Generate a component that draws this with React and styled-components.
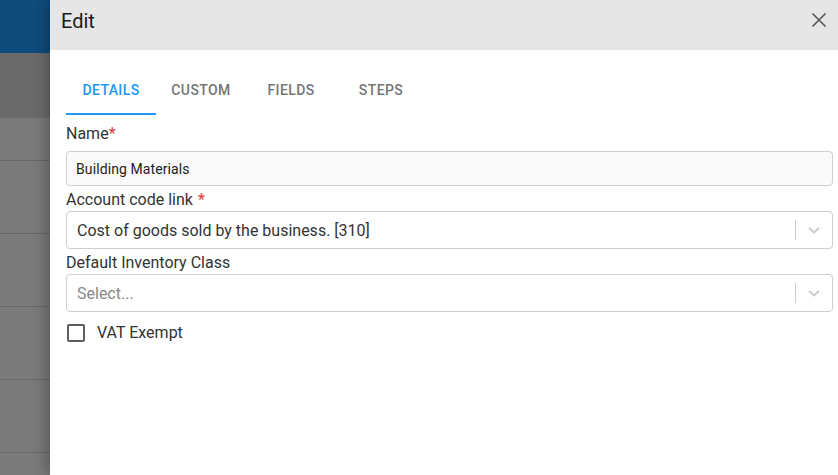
import React from 'react';
import styled, { createGlobalStyle } from 'styled-components';

//----GLOBAL----//

const Global = createGlobalStyle`
  html, body { margin: 0; padding: 0; height: 100%; }
  body { font-family: Roboto, "Liberation Sans", sans-serif; overflow: hidden; }
  #root { height: 100%; }
`;

//----COMPONENT STYLING----//

const Screen = styled.div`
  display: flex;
  width: 838px;
  height: 475px;
`;

const Backdrop = styled.div`
  width: 50px;
  flex-shrink: 0;
  display: flex;
  flex-direction: column;
  background: #7a7a7a;
  overflow: hidden;
`;

const BackBar = styled.div`
  height: 53px;
  flex-shrink: 0;
  background: #0f4b7b;
`;

const BackBand = styled.div`
  height: 65px;
  flex-shrink: 0;
  background: #6a6a6a;
`;

const BackRow = styled.div`
  height: ${p => p.h}px;
  flex-shrink: 0;
  border-bottom: 1px solid #676767;
  box-sizing: border-box;
`;

const Drawer = styled.div`
  flex: 1;
  background: #fff;
  display: flex;
  flex-direction: column;
  box-shadow: -4px 0 12px rgba(0, 0, 0, 0.25);
  position: relative;
`;

const Header = styled.div`
  height: 50px;
  flex-shrink: 0;
  background: #e6e6e6;
  display: flex;
  align-items: center;
  justify-content: space-between;
  padding: 0 10px 0 11px;
`;

const Title = styled.h2`
  margin: -9px 0 0;
  font-size: 20px;
  font-weight: 400;
  color: #1a1a1a;
`;

const Close = styled.button`
  border: none;
  background: none;
  padding: 0;
  width: 18px;
  height: 18px;
  display: flex;
  align-items: center;
  justify-content: center;
  margin-top: -10px;
  cursor: pointer;
`;

const Body = styled.div`
  padding: 17px 5px 0 16px;
  display: flex;
  flex-direction: column;
`;

const Tabs = styled.div`
  display: flex;
  height: 48px;
`;

const Tab = styled.div`
  width: 90px;
  display: flex;
  align-items: center;
  justify-content: center;
  font-size: 14px;
  font-weight: 500;
  letter-spacing: 0.4px;
  color: ${p => (p.active ? '#2196f3' : '#757575')};
  border-bottom: 2px solid ${p => (p.active ? '#2196f3' : 'transparent')};
  box-sizing: border-box;
`;

const Form = styled.div`
  display: flex;
  flex-direction: column;
  padding-top: 9px;
`;

const Label = styled.label`
  font-size: 16px;
  color: #333;
  line-height: 19px;
  margin-bottom: ${p => p.mb ?? 2}px;
`;

const Star = styled.span`
  color: #e53935;
  margin-left: ${p => p.gap || 0}px;
`;

const TextBox = styled.div`
  height: 35px;
  box-sizing: border-box;
  border: 1px solid #cfcfcf;
  border-radius: 4px;
  background: #fafafa;
  display: flex;
  align-items: center;
  padding-left: 9px;
  font-size: 14px;
  letter-spacing: 0.1px;
  color: #222;
  margin-bottom: 4px;
`;

const SelectBox = styled.div`
  height: 38px;
  box-sizing: border-box;
  border: 1px solid #cfcfcf;
  border-radius: 4px;
  background: #fff;
  display: flex;
  align-items: center;
  margin-bottom: ${p => p.mb || 4}px;
`;

const SelectValue = styled.div`
  flex: 1;
  padding-left: 10px;
  font-size: 16px;
  color: ${p => (p.placeholder ? '#888' : '#333')};
`;

const Sep = styled.span`
  width: 1px;
  height: 20px;
  background: #cccccc;
`;

const Chevron = styled.div`
  width: 36px;
  display: flex;
  align-items: center;
  justify-content: center;
`;

const CheckRow = styled.div`
  display: flex;
  align-items: center;
  gap: 12px;
  padding-left: 1px;
`;

const Box = styled.span`
  width: 18px;
  height: 18px;
  box-sizing: border-box;
  border: 2px solid #5f5f5f;
  border-radius: 2px;
`;

const CheckLabel = styled.span`
  font-size: 16px;
  color: #333;
`;

//----COMPONENT BUILDS----//

const ChevronIcon = () => (
  <Chevron>
    <svg width="14" height="10" viewBox="0 0 14 10">
      <path d="M2 3 L7 7.5 L12 3" fill="none" stroke="#cccccc" strokeWidth="2" />
    </svg>
  </Chevron>
);

const App = () => {
  const rows = [43, 73, 73, 73, 73, 73];

  return (
    <Screen>
      <Global />
      <Backdrop>
        <BackBar />
        <BackBand />
        {rows.map((h, i) => (
          <BackRow key={i} h={h} />
        ))}
      </Backdrop>
      <Drawer>
        <Header>
          <Title>Edit</Title>
          <Close aria-label="close">
            <svg width="16" height="16" viewBox="0 0 16 16">
              <path d="M1.5 1.5 L14.5 14.5 M14.5 1.5 L1.5 14.5" stroke="#555" strokeWidth="1.6" />
            </svg>
          </Close>
        </Header>
        <Body>
          <Tabs>
            <Tab active>DETAILS</Tab>
            <Tab>CUSTOM</Tab>
            <Tab>FIELDS</Tab>
            <Tab>STEPS</Tab>
          </Tabs>
          <Form>
            <Label mb={8}>
              Name<Star>*</Star>
            </Label>
            <TextBox>Building Materials</TextBox>
            <Label>
              Account code link<Star gap={5}>*</Star>
            </Label>
            <SelectBox>
              <SelectValue>Cost of goods sold by the business. [310]</SelectValue>
              <Sep />
              <ChevronIcon />
            </SelectBox>
            <Label>Default Inventory Class</Label>
            <SelectBox mb={11}>
              <SelectValue placeholder>Select...</SelectValue>
              <Sep />
              <ChevronIcon />
            </SelectBox>
            <CheckRow>
              <Box />
              <CheckLabel>VAT Exempt</CheckLabel>
            </CheckRow>
          </Form>
        </Body>
      </Drawer>
    </Screen>
  );
};

export default App;
